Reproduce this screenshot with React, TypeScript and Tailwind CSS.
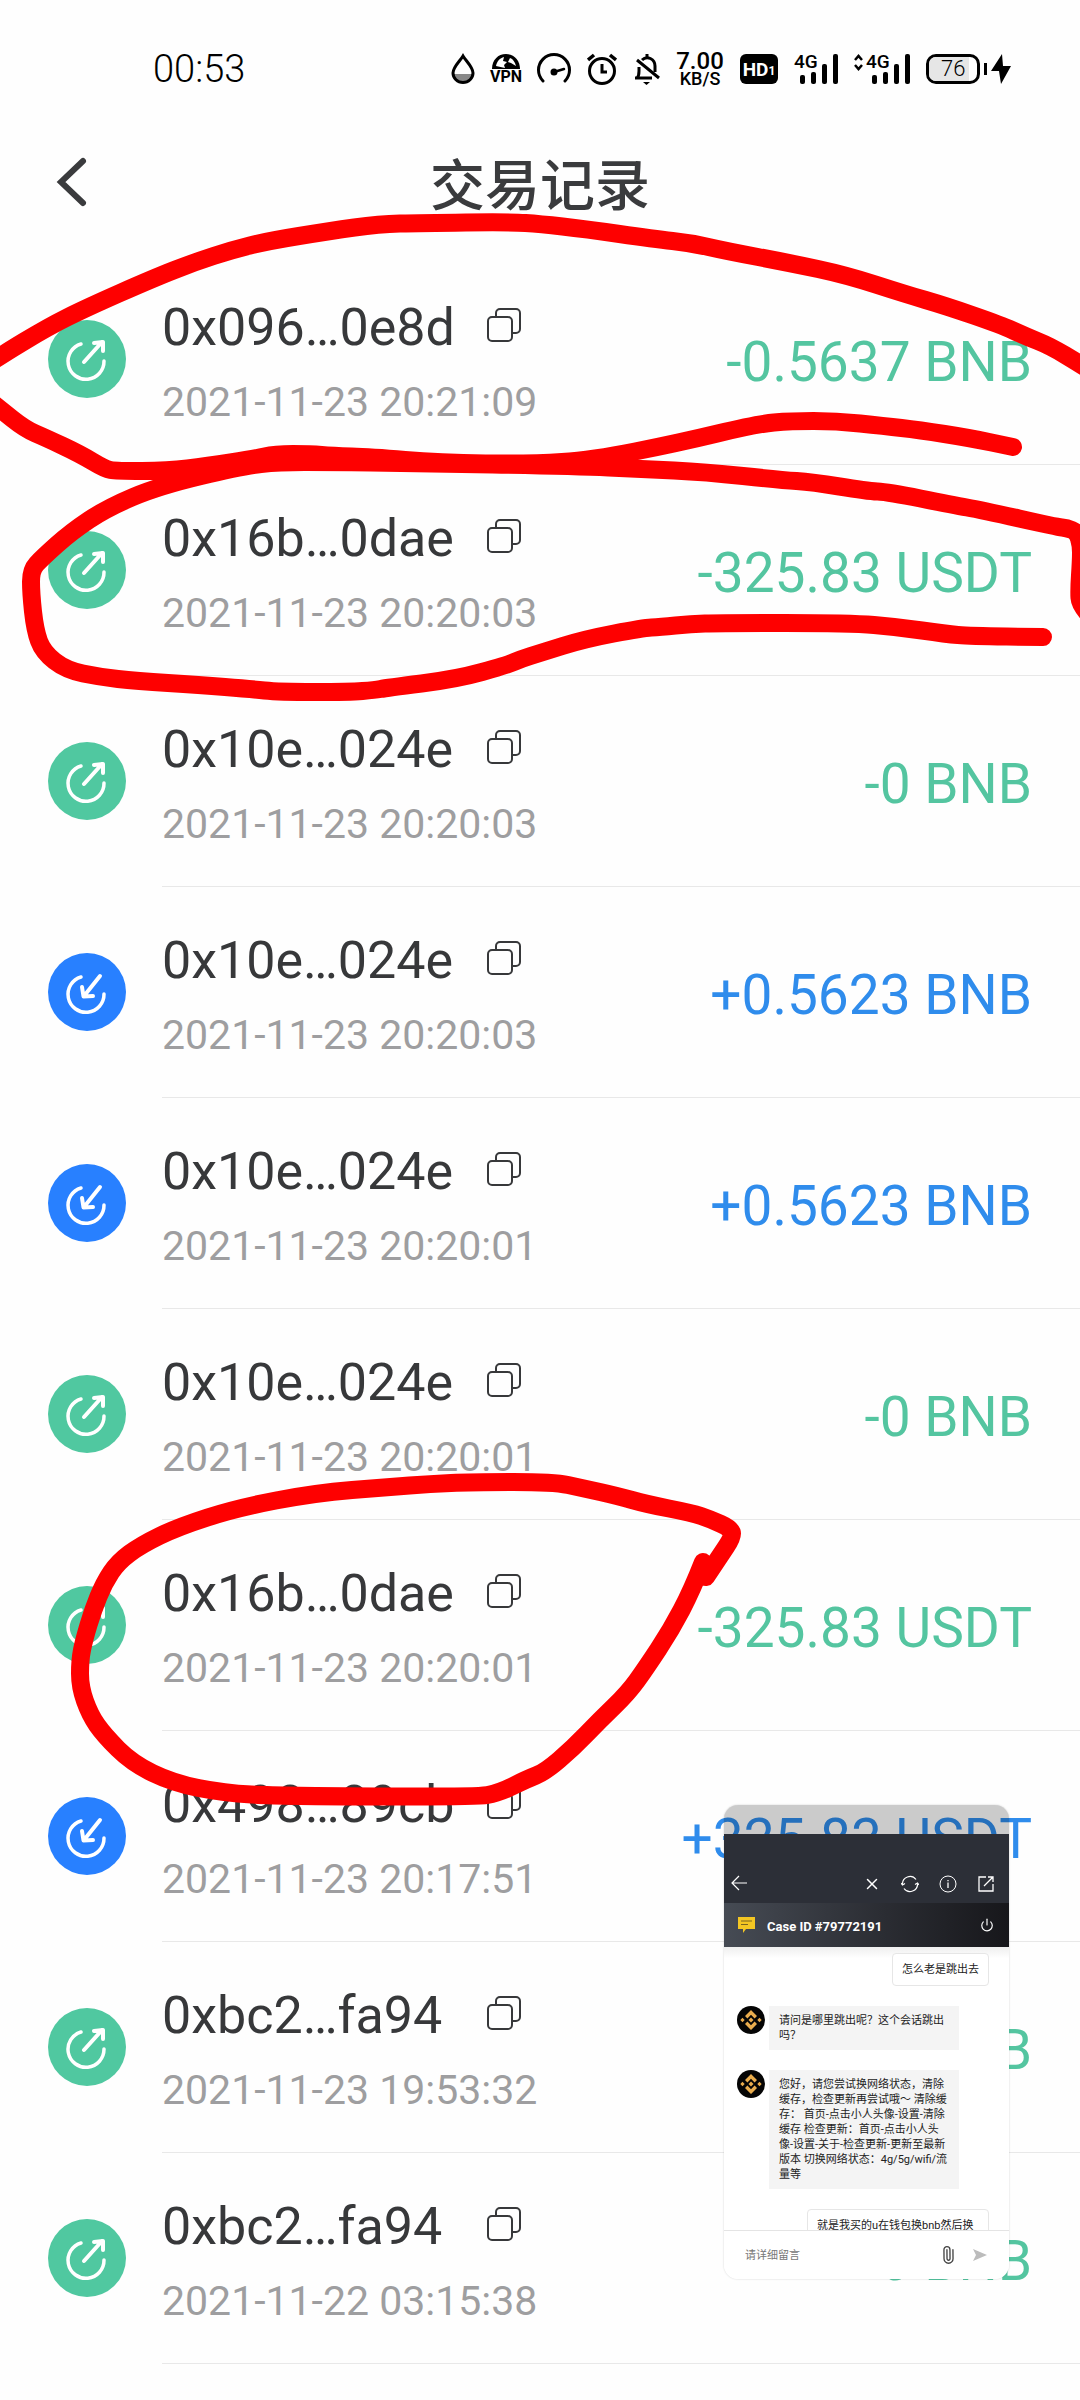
import { Paperclip, Power, X } from 'lucide-react'

type Tx = {
  hash: string
  time: string
  amount: string
  incoming?: boolean
}

const transactions: Tx[] = [
  { hash: '0x096…0e8d', time: '2021-11-23 20:21:09', amount: '-0.5637 BNB' },
  { hash: '0x16b…0dae', time: '2021-11-23 20:20:03', amount: '-325.83 USDT' },
  { hash: '0x10e…024e', time: '2021-11-23 20:20:03', amount: '-0 BNB' },
  { hash: '0x10e…024e', time: '2021-11-23 20:20:03', amount: '+0.5623 BNB', incoming: true },
  { hash: '0x10e…024e', time: '2021-11-23 20:20:01', amount: '+0.5623 BNB', incoming: true },
  { hash: '0x10e…024e', time: '2021-11-23 20:20:01', amount: '-0 BNB' },
  { hash: '0x16b…0dae', time: '2021-11-23 20:20:01', amount: '-325.83 USDT' },
  { hash: '0x498…89cb', time: '2021-11-23 20:17:51', amount: '+325.83 USDT', incoming: true },
  { hash: '0xbc2…fa94', time: '2021-11-23 19:53:32', amount: '-0 BNB' },
  { hash: '0xbc2…fa94', time: '2021-11-22 03:15:38', amount: '-0 BNB' },
]

const supportMessages = [
  ['请问是哪里跳出呢？这个会话跳出', '吗？'],
  [
    '您好，请您尝试换网络状态，清除',
    '缓存，检查更新再尝试哦～ 清除缓',
    '存： 首页-点击小人头像-设置-清除',
    '缓存 检查更新：首页-点击小人头',
    '像-设置-关于-检查更新-更新至最新',
    '版本 切换网络状态：4g/5g/wifi/流',
    '量等',
  ],
]

// Pen strokes drawn over the list
const strokes: number[][][] = [
  [
    [-10, 363], [0, 356], [48, 327], [86, 308], [154, 278], [195, 262], [232, 250], [268, 241], [330, 231],
    [379, 224], [421, 223], [511, 222], [540, 224], [585, 229], [654, 239], [691, 243], [726, 251], [790, 263],
    [846, 275], [905, 294], [946, 306], [1001, 325], [1025, 336], [1050, 346], [1080, 364], [1095, 374],
  ],
  [
    [-10, 401], [0, 409], [25, 429], [46, 438], [80, 454], [105, 469], [116, 471], [168, 471], [207, 466],
    [254, 459], [275, 454], [311, 454], [332, 456], [371, 457], [439, 463], [532, 464], [592, 460], [678, 443],
    [757, 424], [791, 421], [836, 421], [884, 426], [919, 430], [970, 438], [1013, 447],
  ],
  [
    [1092, 618], [1080, 606], [1079, 590], [1081, 560], [1081, 545], [1077, 532], [1067, 528], [1057, 527],
    [981, 510], [953, 505], [888, 492], [867, 491], [812, 482], [781, 480], [705, 472], [643, 469], [574, 466],
    [411, 463], [330, 462], [279, 462], [243, 466], [159, 486], [107, 508], [71, 532], [42, 558], [31, 570],
    [31, 593], [35, 630], [43, 652], [66, 670], [100, 677], [136, 681], [200, 685], [250, 689], [279, 692],
    [350, 692], [375, 690], [386, 688], [457, 679], [507, 665], [521, 659], [540, 653], [585, 639], [643, 628],
    [660, 627], [691, 624], [719, 623], [850, 623], [898, 627], [946, 634], [970, 636], [1043, 637],
  ],
  [
    [703, 1562], [692, 1590], [671, 1630], [646, 1668], [628, 1693], [600, 1720], [573, 1748], [545, 1772],
    [527, 1779], [499, 1793], [476, 1797], [279, 1796], [224, 1793], [173, 1783], [132, 1763], [104, 1735],
    [90, 1715], [80, 1687], [80, 1660], [84, 1640], [93, 1610], [104, 1583], [118, 1562], [141, 1545], [178, 1527],
    [237, 1508], [315, 1493], [389, 1487], [430, 1484], [472, 1482], [554, 1482], [582, 1488], [618, 1496],
    [646, 1504], [692, 1513], [710, 1519], [732, 1529], [732, 1538], [720, 1556], [706, 1577],
  ],
]

function strokePath(pts: number[][]) {
  let d = `M${pts[0][0]} ${pts[0][1]}`
  for (let i = 1; i < pts.length - 1; i++) {
    const [x, y] = pts[i]
    const [nx, ny] = pts[i + 1]
    d += `Q${x} ${y} ${(x + nx) / 2} ${(y + ny) / 2}`
  }
  const last = pts[pts.length - 1]
  return `${d}L${last[0]} ${last[1]}`
}

function SignalBars() {
  return (
    <svg className="h-8 w-11 overflow-visible" viewBox="0 0 44 32">
      <text x="0" y="15" className="font-['Roboto'] text-[19px] font-medium">4G</text>
      <rect x="6" y="22" width="5" height="9" rx="2" />
      <rect x="17" y="19" width="5" height="12" rx="2" />
      <rect x="28" y="11" width="5" height="20" rx="2" />
      <rect x="39" y="1" width="5" height="30" rx="2" />
    </svg>
  )
}

function StatusBar() {
  return (
    <div className="flex h-[138px] items-center justify-between pr-[69px] pl-[153px] text-black">
      <span className="text-[38px] leading-none font-light">00:53</span>
      <div className="flex items-center gap-4">
        {/* eye comfort */}
        <svg className="h-8 w-6" viewBox="0 0 24 32" fill="none">
          <path d="M3 21h18a9 9 0 0 1-18 0z" fill="#888" />
          <path d="M12 3C9 8 2 14 2 20a10 9.500 0 0 0 20 0C22 14 15 8 12 3z" stroke="#000" strokeWidth="3" />
        </svg>
        <div className="flex h-8 w-[30px] flex-col items-center">
          <svg className="h-4 w-[30px]" viewBox="0 0 30 16" fill="none">
            <path d="M1 16C1 7 7 1 15 1s14 6 14 15z" fill="#000" />
            <path d="M5 13C6 8 9 5 13 4l-1 4 4 1-3 3 1 3zM19 5c3 1 5 4 6 8l-5-3-3-1z" fill="#fff" />
          </svg>
          <span className="text-[16px] leading-4 font-bold">VPN</span>
        </div>
        {/* speed */}
        <svg className="h-8 w-[34px]" viewBox="0 0 34 32" fill="none" stroke="#000" strokeWidth="3" strokeLinecap="round">
          <path d="M6 28A15.500 15.500 0 1 1 28 28" />
          <path d="M17 19l10-3" strokeWidth="2.500" />
          <circle cx="17" cy="19" r="2" fill="#000" />
        </svg>
        {/* alarm */}
        <svg className="h-8 w-[30px]" viewBox="0 0 30 32" fill="none" stroke="#000" strokeWidth="3">
          <circle cx="15" cy="18" r="12.500" />
          <path d="M15 11v8h5" />
          <path d="M1 7l6-5M29 7l-6-5" strokeWidth="3.500" />
        </svg>
        {/* muted */}
        <svg className="h-8 w-[27px]" viewBox="0 0 27 32" fill="none" stroke="#000" strokeWidth="3">
          <path d="M2 25h17M4 25c2-2 2-4 2-7v-4M9 7c5-5 13-1 13 6v6" />
          <path d="M14 1v4M4 7l22 18" />
          <path d="M10 29h7l-3.500 3z" fill="#000" stroke="none" />
        </svg>
        <div className="flex w-12 flex-col items-center font-medium">
          <span className="text-[24px] leading-5">7.00</span>
          <span className="text-[18px] leading-4">KB/S</span>
        </div>
        <div className="flex h-[30px] w-[38px] items-center justify-center rounded-md bg-black font-bold text-white">
          <span className="text-[19px] leading-none">HD</span>
          <span className="pt-1 text-[12px] leading-none">1</span>
        </div>
        <SignalBars />
        <div className="flex items-center gap-[3px]">
          <svg className="h-8 w-[9px]" viewBox="0 0 9 32" fill="none" stroke="#000" strokeWidth="2.500">
            <path d="M1 7l3.500-4L8 7M1 12l3.500 4L8 12" />
          </svg>
          <SignalBars />
        </div>
        <div className="flex items-center gap-1">
          <div className="flex h-[30px] w-[54px] items-center rounded-[10px] border-3 border-black">
            <span className="h-6 w-10 rounded-l-[7px] bg-[#e6e6e6] pl-3 text-[22px] leading-6 font-light">76</span>
          </div>
          <span className="h-3 w-[3px] bg-black" />
          <svg className="h-8 w-5" viewBox="0 0 20 32">
            <path d="M11 1L0 18h8l2 13L20 13h-8z" />
          </svg>
        </div>
      </div>
    </div>
  )
}

function DirectionIcon({ incoming }: { incoming?: boolean }) {
  return (
    <svg className="mb-0.5 size-[78px] shrink-0" viewBox="0 0 78 78" fill="none" strokeLinecap="round" strokeLinejoin="round">
      <circle cx="39" cy="39" r="39" fill={incoming ? '#2880ff' : '#50c8a0'} />
      <g stroke="#fff" strokeWidth="3.500">
        <path d="M33 24A18 18 0 1 0 56 41" />
        {incoming ? (
          <path d="M52 23L36 43M34 34l1.500 9.500L45 43" strokeWidth="4" />
        ) : (
          <path d="M36 42l18-20M46 23l9-1v9" strokeWidth="4" />
        )}
      </g>
    </svg>
  )
}

function CopyIcon() {
  return (
    <svg className="h-10 w-[34px]" viewBox="0 0 34 40" fill="none" stroke="#37383a" strokeWidth="2">
      <path d="M9 8V5a4 4 0 0 1 4-4h16a4 4 0 0 1 4 4v16a4 4 0 0 1-4 4h-4" />
      <rect x="1" y="9" width="24" height="24" rx="4" />
    </svg>
  )
}

function TxRow({ tx }: { tx: Tx }) {
  return (
    <li className="flex items-center gap-9 pl-12">
      <DirectionIcon incoming={tx.incoming} />
      <div className="flex h-[211px] flex-1 items-center justify-between border-b border-[#e8e8e8] pt-1.5 pr-12">
        <div className="flex flex-col gap-5">
          <div className="flex items-center">
            <span className="w-[325px] text-[52px] leading-[60px] text-[#37383a]">{tx.hash}</span>
            <button aria-label="复制">
              <CopyIcon />
            </button>
          </div>
          <time className="text-[41px] leading-[48px] text-[#9e9ea0]">{tx.time}</time>
        </div>
        <span
          className={`text-[55px] leading-[64px] whitespace-nowrap ${tx.incoming ? 'text-[#2f8cec]' : 'text-[#54c5a0]'}`}
        >
          {tx.amount}
        </span>
      </div>
    </li>
  )
}

function BotAvatar() {
  return (
    <svg className="size-7 shrink-0" viewBox="0 0 28 28">
      <circle cx="14" cy="14" r="14" fill="#050505" />
      <g fill="#e9ac4d">
        <path d="M14 4l6 6-2.400 2.400L14 8.800l-3.600 3.600L8 10z" />
        <path d="M14 24l6-6-2.400-2.400L14 19.200l-3.600-3.600L8 18z" />
        <path d="M14 11.500l2.500 2.500-2.500 2.500-2.500-2.500z" />
        <path d="M5.500 11.800L7.700 14l-2.200 2.200L3.300 14zM22.500 11.800l2.200 2.200-2.200 2.200-2.200-2.200z" />
      </g>
    </svg>
  )
}

function SupportWindow() {
  return (
    <section className="absolute top-[1805px] right-[71px] z-20 w-[285px] overflow-hidden rounded-[14px] text-[11px] leading-[15px] text-[#222] shadow-[0_0_2px_rgba(0,0,0,0.2)]">
      <div className="h-[29px] bg-black/20" />
      <div className="flex h-[69px] items-end justify-between bg-[#2c2f37] px-[7px] pb-[10px] text-white">
        <button aria-label="返回">
          <svg className="h-5 w-4" viewBox="0 0 16 20" fill="none" stroke="currentColor" strokeWidth="1.200">
            <path d="M16 10H1M8 3l-7 7 7 7" />
          </svg>
        </button>
        <div className="flex items-center gap-5 pr-[7px]">
          <button aria-label="关闭">
            <X className="size-[18px]" strokeWidth={2} />
          </button>
          <button aria-label="刷新">
            <svg className="size-[18px]" viewBox="0 0 18 18" fill="none" stroke="currentColor" strokeWidth="1.200">
              <path d="M1.500 9.500A7.500 7.500 0 0 1 15 4.500M16.500 8.500A7.500 7.500 0 0 1 3 13.500" />
              <path d="M0 8l1.500 2L4 8.500M14 9.500L16.500 8 18 10" />
            </svg>
          </button>
          <button aria-label="信息">
            <svg className="size-[18px]" viewBox="0 0 18 18" fill="none" stroke="currentColor" strokeWidth="1">
              <circle cx="9" cy="9" r="8" />
              <path d="M9 7.500V13M9 5v1.300" strokeWidth="1.300" />
            </svg>
          </button>
          <button aria-label="在浏览器打开">
            <svg className="size-[18px]" viewBox="0 0 18 18" fill="none" stroke="currentColor" strokeWidth="1.300">
              <path d="M9 2H2v14h14V9M11 2h5v5M16 2L7 11" />
            </svg>
          </button>
        </div>
      </div>
      <div className="flex h-11 items-center gap-3 bg-linear-to-r from-[#464b54] to-[#17171b] pr-[15px] pl-[14px] text-white">
        <svg className="h-[18px] w-[17px]" viewBox="0 0 17 18">
          <path d="M0 1h17v12H8l-3 4v-4H0z" fill="#f3c623" />
          <path d="M3 5h11M3 8.500h7" stroke="#7a6520" strokeWidth="1" />
        </svg>
        <h2 className="flex-1 pt-0.5 text-[13px] font-bold">Case ID #79772191</h2>
        <button aria-label="结束会话">
          <Power className="size-[14px]" />
        </button>
      </div>
      <div className="flex h-[283px] flex-col gap-5 overflow-hidden bg-white bg-linear-to-b from-[#efefef] from-0% to-white to-4% pt-[6px] pr-5 pl-[13px] whitespace-nowrap">
        <p className="shrink-0 self-end rounded-sm border border-[#e6e6e6] bg-white px-[9px] py-2">怎么老是跳出去</p>
        {supportMessages.map((lines) => (
          <div key={lines[0]} className="flex shrink-0 gap-1">
            <BotAvatar />
            <p className="w-[190px] bg-[#f4f4f4] py-[7px] pl-[10px] whitespace-pre">{lines.join('\n')}</p>
          </div>
        ))}
        <p className="w-[182px] shrink-0 self-end rounded-sm border border-[#e6e6e6] bg-white px-[9px] py-2">
          就是我买的u在钱包换bnb然后换
        </p>
      </div>
      <form className="flex h-[49px] items-center border-t border-[#e4e4e4] bg-white pr-[22px] pl-[21px]">
        <input
          aria-label="留言"
          placeholder="请详细留言"
          className="min-w-0 flex-1 bg-transparent outline-none placeholder:text-[#777]"
        />
        <button type="button" aria-label="附件" className="pr-4">
          <Paperclip className="size-[18px] -rotate-45 text-[#444]" strokeWidth={1.8} />
        </button>
        <button type="submit" aria-label="发送">
          <svg className="h-3 w-[14px]" viewBox="0 0 14 12">
            <path d="M0 0l14 6-14 6 3-6z" fill="#bcbcbc" />
          </svg>
        </button>
      </form>
    </section>
  )
}

export default function App() {
  return (
    <div className="relative min-h-screen overflow-hidden bg-[#fefefe] font-['Roboto','Noto_Sans_CJK_SC',sans-serif]">
      <StatusBar />
      <header className="grid h-24 grid-cols-[1fr_auto_1fr] items-center text-[#3a3b3d]">
        <button aria-label="返回" className="justify-self-start pb-2 pl-[55px]">
          <svg className="h-[52px] w-[34px]" viewBox="0 0 34 52" fill="none" stroke="currentColor" strokeWidth="6" strokeLinecap="round">
            <path d="M28 5L6 26l22 21" />
          </svg>
        </button>
        <h1 className="text-[55px] leading-none font-medium">交易记录</h1>
      </header>
      <main className="pt-5">
        <ul>
          {transactions.map((tx, i) => (
            <TxRow key={i} tx={tx} />
          ))}
        </ul>
      </main>
      <svg
        className="pointer-events-none absolute top-0 left-0 z-10 w-full"
        viewBox="0 0 1080 2400"
        fill="none"
        stroke="#fe0000"
        strokeWidth="18"
        strokeLinecap="round"
        strokeLinejoin="round"
      >
        {strokes.map((pts, i) => (
          <path key={i} d={strokePath(pts)} />
        ))}
      </svg>
      <SupportWindow />
    </div>
  )
}
